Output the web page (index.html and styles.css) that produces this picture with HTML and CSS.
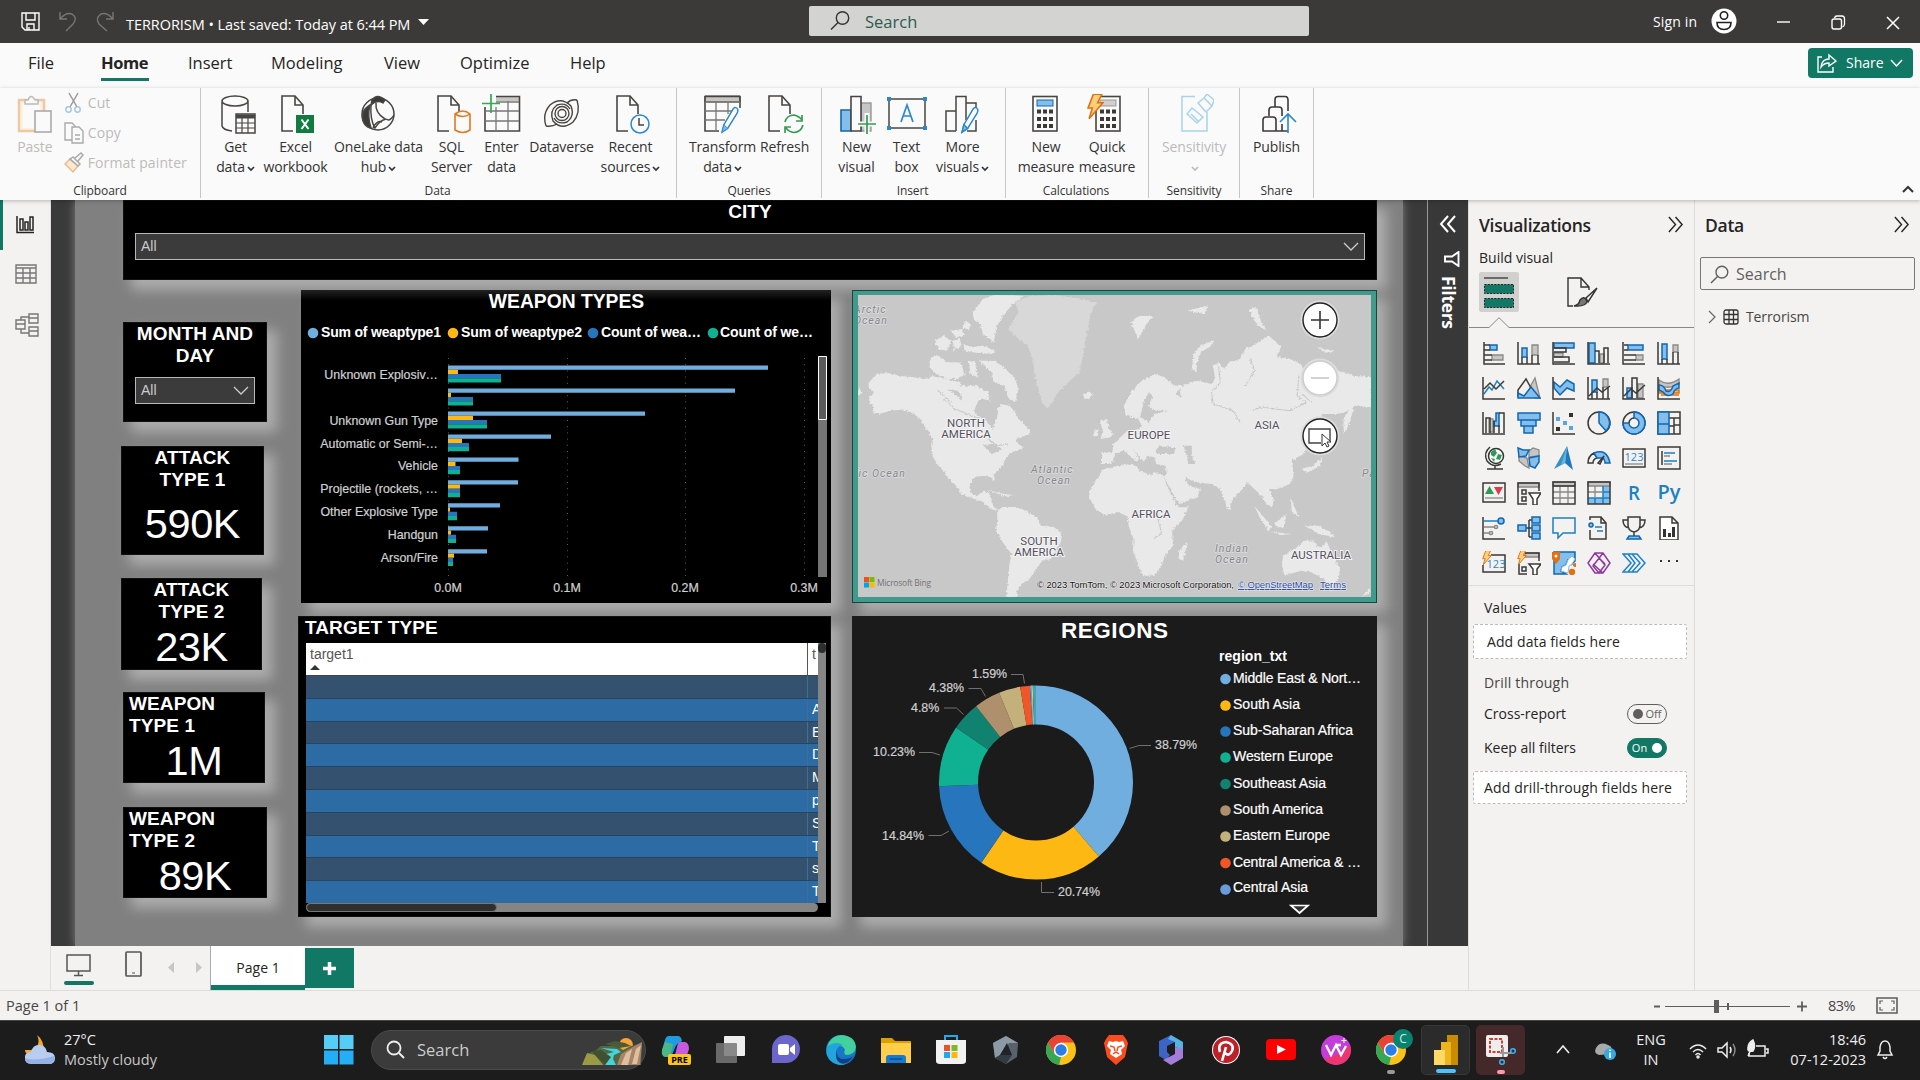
FILE: index.html
```html
<!DOCTYPE html>
<html lang="en">
<head>
<meta charset="utf-8">
<title>TERRORISM - Power BI Desktop</title>
<link rel="stylesheet" href="styles.css">
</head>
<body>
<svg class="defs" width="0" height="0">
  <defs>
    <symbol id="page" viewBox="0 0 40 40"><path d="M17 37H6V2H19L27 11V20" fill="#fafafa" stroke="#484644" stroke-width="1.6"/><path d="M19 2V11H27" fill="none" stroke="#484644" stroke-width="1.6"/></symbol>
    <symbol id="pencil" viewBox="0 0 20 30"><path d="M2 28L4 20L14 3Q17 0 19 4Q19 6 18 8L8 24Z" fill="#fff" stroke="#2b88d0" stroke-width="1.6"/><path d="M2 28L4 20L8 24Z" fill="#83beec" stroke="#2b88d0"/></symbol>
    <symbol id="chrome" viewBox="0 0 30 30"><circle cx="15" cy="15" r="15" fill="#fbc116"/><path d="M2 7.500L8.500 19L15 22L13 29.900A15 15 0 0 1 2 7.500" fill="#34a853"/><path d="M2 7.500A15 15 0 0 1 28 7.500H15L8.500 12.500 8.500 19Z" fill="#e94335"/><circle cx="15" cy="15" r="7.200" fill="#fff"/><circle cx="15" cy="15" r="5.700" fill="#2b7de9"/></symbol>
    <symbol id="bolt" viewBox="0 0 16 26"><path d="M6 1H14L10 9H15L2 24L5 14H1Z" fill="#fcd07a" stroke="#e07010" stroke-width="1.500"/></symbol>
    <symbol id="lens" viewBox="0 0 20 20"><circle cx="12.500" cy="7.500" r="6.200" fill="none" stroke="currentColor" stroke-width="1.400"/><path d="M8 12L1 19" stroke="currentColor" stroke-width="1.500"/></symbol>
    <symbol id="dbl" viewBox="0 0 16 18"><path d="M1 1L8 9L1 17M8 1L15 9L8 17" fill="none" stroke="currentColor" stroke-width="1.500"/></symbol>
    <symbol id="down" viewBox="0 0 8 6"><path d="M1 1L4 4L7 1" fill="none" stroke="currentColor" stroke-width="1.700"/></symbol>
    <filter id="coast" x="-5%" y="-5%" width="110%" height="110%"><feTurbulence type="fractalNoise" baseFrequency=".14" numOctaves="3" seed="4"/><feDisplacementMap in="SourceGraphic" scale="11" xChannelSelector="R" yChannelSelector="G"/></filter>
  </defs>
</svg>

<header class="titlebar">
  <svg class="qat" width="100" height="24" viewBox="0 0 100 24" fill="none"><path d="M2 3H19V20H5L2 17ZM6 3V10H15V3M7 20V14H14V20M9 17V20" stroke="#fff" stroke-width="1.400"/><path d="M40 2V9H47M40 9Q46 2 52 4Q58 8 53 14L46 21" stroke="#787673" stroke-width="1.400"/><path d="M93 2V9H86M93 9Q87 2 81 4Q75 8 79 14L87 21" stroke="#787673" stroke-width="1.400"/></svg>
  <span class="doc">TERRORISM • Last saved: Today at 6:44 PM</span>
  <svg class="doc-caret" width="12" height="7"><path d="M0 0H11L5.500 6Z" fill="#fff"/></svg>
  <div class="top-search"><svg width="20" height="21"><use href="#lens"/></svg><span>Search</span></div>
  <span class="signin">Sign in</span>
  <svg class="winctl" width="192" height="28" viewBox="0 0 192 28" fill="none"><circle cx="13" cy="14" r="12.500" fill="#fff"/><circle cx="13" cy="8.500" r="3.700" stroke="#222" stroke-width="1.600"/><path d="M6 15.500H20Q20 22.500 13 22.500Q6 22.500 6 15.500Z" stroke="#222" stroke-width="1.600"/><path d="M66 15H79" stroke="#fff" stroke-width="1.400"/><rect x="121" y="12" width="9.500" height="10" rx="2" stroke="#fff" stroke-width="1.400"/><path d="M123.500 11Q124 9 126 9H131Q133.500 9 133.500 12V17Q133.500 19 131.500 20" stroke="#fff" stroke-width="1.300"/><path d="M176 10L188 22M188 10L176 22" stroke="#fff" stroke-width="1.500"/></svg>
</header>

<nav class="tabs">
  <span class="t-file">File</span><span class="t-home on">Home</span><span class="t-insert">Insert</span><span class="t-model">Modeling</span><span class="t-view">View</span><span class="t-opt">Optimize</span><span>Help</span>
  <button class="share"><svg width="20" height="20" fill="none" stroke="#fff" stroke-width="1.400"><path d="M5 4H1V19H16V14M4 14Q5 6 12 6V2L19 8L12 13V10Q7 10 4 14Z"/></svg><span>Share</span><svg width="13" height="9" fill="none" stroke="#fff" stroke-width="1.500"><path d="M1 1L6.500 7L12 1"/></svg></button>
</nav>

<section class="ribbon">
  <div class="group g-clip"><div class="tools">
    <div class="tool paste dim"><svg width="36" height="40" viewBox="0 0 36 40" fill="none"><rect x="2" y="6" width="25" height="31" fill="#fdf1dc" stroke="#eac9a4" stroke-width="2.500"/><rect x="6" y="9" width="17" height="25" fill="#fafafa"/><path d="M8 10V6H11Q14 -1 18 6H21V10Z" fill="#fafafa" stroke="#bbb" stroke-width="1.500"/><rect x="18" y="17" width="16" height="21" fill="#fafafa" stroke="#aaa" stroke-width="1.600"/></svg><span>Paste</span></div>
    <div class="small">
      <div><svg width="20" height="22" fill="none"><path d="M5 1L13 15M14 1L6 15" stroke="#999" stroke-width="1.500"/><circle cx="4.500" cy="17.500" r="2.700" stroke="#a4c8e6" stroke-width="1.500"/><circle cx="13.500" cy="17.500" r="2.700" stroke="#a4c8e6" stroke-width="1.500"/></svg>Cut</div>
      <div><svg width="20" height="22" fill="#fafafa" stroke="#aaa" stroke-width="1.400"><path d="M8 18H1V1H8L11 4V6"/><path d="M8 5H15L19 9V21H8ZM11 13H16M11 17H16"/></svg>Copy</div>
      <div><svg width="20" height="22" fill="none"><path d="M1 12L6 7L14 14L9 20Z" fill="#fde9cf" stroke="#e8bb8d" stroke-width="1.500"/><path d="M6 7L9 5L16 12L14 14ZM11 6L17 1L19 3L14 9" stroke="#aaa" stroke-width="1.500"/></svg>Format painter</div>
    </div></div><label>Clipboard</label></div>
  <div class="group g-data"><div class="tools">
    <div class="tool w60"><svg width="40" height="40" viewBox="0 0 40 40" fill="none" stroke="#484644" stroke-width="1.500"><path d="M16 37Q7 36 6 32V7M32 7V18M32 7A13 5 0 0 1 6 7A13 5 0 0 1 32 7Z"/><rect x="20" y="20" width="19" height="19" fill="#fafafa"/><path d="M20 22.500H39" stroke-width="4"/><path d="M20 29H39M20 34H39M26 24V39M32 24V39" stroke-width="1.200"/></svg><span>Get<br>data<svg class="dd"><use href="#down"/></svg></span></div>
    <div class="tool w60"><svg width="40" height="40" viewBox="0 0 40 40"><use href="#page"/><rect x="20" y="21" width="18" height="18" fill="#107c41"/><path d="M25.500 25.500L32.500 35M32.500 25.500L25.500 35" stroke="#fff" stroke-width="2"/></svg><span>Excel<br>workbook</span></div>
    <div class="tool w106"><svg width="40" height="40" viewBox="0 0 40 40" fill="none" stroke="#484644" stroke-width="1.500"><circle cx="19" cy="20" r="16"/><path d="M13 6Q18 -1 26 6L24 9Q18 5 12 11ZM11 11Q1 17 4 27Q6 33 12 34Q8 22 11 11Z" fill="#3b3a39"/><path d="M12 11Q11 26 16 34Q20 27 27 25M17 9Q16 19 26 25"/><path d="M27 25Q31 28 35 21M14 34Q18 26 23 28"/></svg><span>OneLake data<br>hub<svg class="dd"><use href="#down"/></svg></span></div>
    <div class="tool w40"><svg width="40" height="40" viewBox="0 0 40 40"><use href="#page"/><path d="M23 20Q31 14 38 20V36Q31 41 23 36Z" fill="#fafafa" stroke="#e07a20" stroke-width="1.600"/><path d="M23 20Q31 25 38 20" fill="none" stroke="#e07a20" stroke-width="1.500"/></svg><span>SQL<br>Server</span></div>
    <div class="tool w60"><svg width="40" height="40" viewBox="0 0 40 40" fill="none" stroke="#484644"><path d="M14 3H37V7H14Z" fill="#c8c6c4" stroke="none"/><path d="M14 2.500H37.500V37H3V13" stroke-width="1.600"/><path d="M3 17H37M3 27H37M14 13V37M26 7V37M14 8H37" stroke="#777" stroke-width="1.300"/><path d="M9 0V19M0 9.500H18" stroke="#35a853" stroke-width="1.700"/></svg><span>Enter<br>data</span></div>
    <div class="tool w60"><svg width="40" height="40" viewBox="0 0 40 40" fill="none" stroke="#484644" stroke-width="1.400"><path d="M35 6Q39 19 31 28Q20 37 11 27Q7 17 15 11Q24 8 28 15M35 6Q29 5 25 9"/><path d="M4 32Q0 20 8 11Q19 2 29 12Q33 22 25 28Q16 31 12 24M4 32Q10 33 15 30"/><circle cx="20" cy="19.500" r="7"/><circle cx="20" cy="19.500" r="4"/></svg><span>Dataverse</span></div>
    <div class="tool w78"><svg width="40" height="40" viewBox="0 0 40 40"><use href="#page"/><circle cx="29" cy="30" r="9" fill="#fafafa" stroke="#2b88d0" stroke-width="1.500"/><path d="M28 24V31H33" fill="none" stroke="#484644" stroke-width="1.500"/></svg><span>Recent<br>sources<svg class="dd"><use href="#down"/></svg></span></div>
  </div><label>Data</label></div>
  <div class="group g-query"><div class="tools">
    <div class="tool w76"><svg width="40" height="40" viewBox="0 0 40 40" fill="none" stroke="#484644"><path d="M2 2H37V8H2Z" fill="#c8c6c4"/><path d="M16 37H2V2.500H37V14" stroke-width="1.600"/><path d="M2 8H37M2 17H30M2 26H22M13 8V37M25 8V20" stroke="#777" stroke-width="1.300"/><use href="#pencil" x="14" y="12" width="25" height="28"/></svg><span>Transform<br>data<svg class="dd"><use href="#down"/></svg></span></div>
    <div class="tool w48"><svg width="40" height="40" viewBox="0 0 40 40"><use href="#page" x="-2"/><path d="M20 28Q22 21 29 21Q34 22 37 26M37 21V27H31M38 31Q36 38 29 38.500Q24 38 21 34M20 39V33H26" fill="none" stroke="#379a56" stroke-width="1.700"/></svg><span>Refresh</span></div>
  </div><label>Queries</label></div>
  <div class="group g-insert"><div class="tools">
    <div class="tool w50"><svg width="40" height="40" viewBox="0 0 40 40"><path d="M24 9H34V37H24Z" fill="#c8c6c4" stroke="#999" stroke-width="1.400"/><path d="M4 16H14V37H4Z" fill="#83beec" stroke="#1068b0" stroke-width="1.600"/><path d="M14 2.500H24V37H14Z" fill="#fafafa" stroke="#484644" stroke-width="1.600"/><path d="M30 19V40M20 30H40" stroke="#fafafa" stroke-width="5"/><path d="M30 21V40M21 30H39" stroke="#379a56" stroke-width="1.700"/></svg><span>New<br>visual</span></div>
    <div class="tool w50"><svg width="40" height="40" viewBox="0 0 40 40"><rect x="2" y="5" width="36" height="29" fill="none" stroke="#484644" stroke-width="1.500"/><g fill="#2b88d0"><path d="M0 3h4v4H0zM36 3h4v4h-4zM0 32h4v4H0zM36 32h4v4h-4z"/></g><path d="M14 28L20 11L26 28M16 22H24" fill="none" stroke="#2b88d0" stroke-width="1.700"/></svg><span>Text<br>box</span></div>
    <div class="tool w62"><svg width="40" height="40" viewBox="0 0 40 40" fill="none" stroke="#484644" stroke-width="1.500"><path d="M13 37H3V17H13V37M13 17V2.500H23V26M23 9H33V14M33 26V37H24"/><use href="#pencil" x="13" y="12" width="27" height="28"/></svg><span>More<br>visuals<svg class="dd"><use href="#down"/></svg></span></div>
  </div><label>Insert</label></div>
  <div class="group g-calc"><div class="tools">
    <div class="tool w62"><svg width="40" height="40" viewBox="0 0 40 40"><rect x="7" y="2.500" width="24" height="34.500" fill="#fafafa" stroke="#484644" stroke-width="1.600"/><rect x="11" y="6" width="16" height="6" fill="#83beec" stroke="#1068b0"/><path d="M11 17.500h17M11 25h17M11 32h17" stroke="#3b3a39" stroke-width="4" stroke-dasharray="4 2"/></svg><span>New<br>measure</span></div>
    <div class="tool w60"><svg width="40" height="40" viewBox="0 0 40 40"><rect x="9" y="2.500" width="24" height="34.500" fill="#fafafa" stroke="#484644" stroke-width="1.600"/><rect x="13" y="6" width="16" height="6" fill="#d2d0ce" stroke="#999"/><path d="M13 17.500h17M13 25h17M13 32h17" stroke="#3b3a39" stroke-width="4" stroke-dasharray="4 2"/><use href="#bolt" x="0" y="-1" width="17" height="28"/></svg><span>Quick<br>measure</span></div>
  </div><label>Calculations</label></div>
  <div class="group g-sens"><div class="tools"><div class="tool w60 dim"><svg width="40" height="40" viewBox="0 0 40 40" fill="none" stroke="#a9d3ea" stroke-width="1.500"><path d="M21 2.500H8V37H33V18"/><path d="M13 20L18 14L29 23L23 29ZM17 20L24 27M24 9L30 4L38 12L32 18ZM30 4L33 0L40 6L38 12M25 10L31 17"/></svg><span>Sensitivity<br><svg class="dd"><use href="#down"/></svg></span></div></div><label>Sensitivity</label></div>
  <div class="group g-share"><div class="tools"><div class="tool w60"><svg class="pub" width="40" height="40" viewBox="0 0 40 40" fill="none" stroke="#3b3a39" stroke-width="1.600"><path d="M15 13V6Q15 2.500 18 2.500H25Q28 2.500 28 6V17M9 22V16Q9 13 12 13H19Q22 13 22 16V22M28 37H3V26Q3 23 6 23H13Q16 23 16 26V37M22 30V37"/><path d="M28 39V20M20 28L28 20L36 28" stroke="#2b88d0"/></svg><span>Publish</span></div></div><label>Share</label></div>
  <svg class="collapse" width="12" height="8" fill="none" stroke="#333" stroke-width="2"><path d="M1 7L6 2L11 7"/></svg>
</section>

<main class="work">
  <div class="stage-wrap">
    <div class="upper">
      <aside class="rail">
        <svg width="20" height="20" viewBox="0 0 20 20" fill="none" stroke="#252423" stroke-width="1.500"><path d="M2 1V17.500H19"/><path d="M5 4H8V15H5ZM10 7H13V15H10ZM15 2H18V15H15Z"/></svg>
        <svg width="22" height="20" viewBox="0 0 22 20" fill="none" stroke="#777" stroke-width="1.400"><path d="M1 1H21V19H1ZM1 4H21M1 9H21M1 14H21M8 4V19M15 4V19"/></svg>
        <svg width="24" height="24" viewBox="0 0 24 24" fill="none" stroke="#777" stroke-width="1.400"><path d="M14 1H23V10H14ZM14 5H23M1 7H10V16H1ZM1 11H10M14 14H23V23H14ZM14 18H23M6 7V4H14M6 16V20H14"/></svg>
      </aside>
      <div class="stage">
        <div class="report">
          <section class="visual city"><h2>CITY</h2><div class="slicer"><span>All</span><svg width="16" height="10"><path d="M1 1L8 8L15 1" fill="none" stroke="#ccc" stroke-width="1.300"/></svg></div></section>
          <div class="report-body">
            <div class="kpis">
              <section class="visual month"><h2>MONTH AND<br>DAY</h2><div class="slicer"><span>All</span><svg width="16" height="10"><path d="M1 1L8 8L15 1" fill="none" stroke="#ccc" stroke-width="1.300"/></svg></div></section>
              <section class="visual kpi k1"><h2>ATTACK<br>TYPE 1</h2><b>590K</b></section>
              <section class="visual kpi k2"><h2>ATTACK<br>TYPE 2</h2><b>23K</b></section>
              <section class="visual kpi k3"><h2>WEAPON<br>TYPE 1</h2><b>1M</b></section>
              <section class="visual kpi k4"><h2>WEAPON<br>TYPE 2</h2><b>89K</b></section>
            </div>
            <div class="charts">
              <section class="visual weapons">
                <svg width="530" height="314" viewBox="301 290 530 314">
                  <text class="vt" x="566.500" y="308" text-anchor="middle">WEAPON TYPES</text>
                  <g class="lg"><circle cx="313" cy="333" r="5.300" fill="#70aee0"/><text x="321" y="337" textLength="120">Sum of weaptype1</text><circle cx="453" cy="333" r="5.300" fill="#fdb813"/><text x="461" y="337" textLength="121">Sum of weaptype2</text><circle cx="593" cy="333" r="5.300" fill="#2776bd"/><text x="601" y="337" textLength="100">Count of wea…</text><circle cx="713" cy="333" r="5.300" fill="#10b093"/><text x="720" y="337" textLength="93">Count of we…</text></g>
                  <path d="M448.500 358V577M567.500 358V577M685.500 358V577M804.500 358V577" stroke="#5a5a5a" stroke-dasharray="1 5.200"/>
                  <path fill="#70aee0" d="M448 365.500h320v4.300H448zM448 388.500h287v4.300H448zM448 411.500h197v4.300H448zM448 434.400h103v4.300H448zM448 457.400h70.500v4.300H448zM448 480.300h70v4.300H448zM448 503.300h52v4.300H448zM448 526.200h40v4.300H448zM448 549.200h39v4.300H448z"/>
                  <path fill="#fdb813" d="M448 369.800h10v4.200h-10zM448 392.800h3v4.200h-3zM448 415.800h25v4.200h-25zM448 438.700h14v4.200h-14zM448 461.700h7.500v4.200H448zM448 484.600h12v4.200h-12zM448 507.600h2v4.200h-2zM448 530.500h3v4.200h-3zM448 553.500h6v4.200h-6z"/>
                  <path fill="#2776bd" d="M448 374h53v4.200h-53zM448 397h25v4.200h-25zM448 420h39v4.200h-39zM448 442.900h21v4.200h-21zM448 465.900h12v4.200h-12zM448 488.800h12v4.200h-12zM448 511.800h9v4.200h-9zM448 534.700h8v4.200h-8zM448 557.700h5v4.200h-5z"/>
                  <path fill="#10b093" d="M448 378.200h53v4.200h-53zM448 401.200h25v4.200h-25zM448 424.200h39v4.200h-39zM448 447.100h21v4.200h-21zM448 470.100h12v4.200h-12zM448 493h12v4.200h-12zM448 516h9v4.200h-9zM448 538.900h8v4.200h-8zM448 561.900h5v4.200h-5z"/>
                  <g class="ax" text-anchor="end"><text x="438" y="379">Unknown Explosiv…</text><text x="438" y="425">Unknown Gun Type</text><text x="438" y="448">Automatic or Semi-…</text><text x="438" y="470">Vehicle</text><text x="438" y="493">Projectile (rockets, …</text><text x="438" y="516">Other Explosive Type</text><text x="438" y="539">Handgun</text><text x="438" y="562">Arson/Fire</text></g>
                  <g class="ax" text-anchor="middle"><text x="448" y="592">0.0M</text><text x="567" y="592">0.1M</text><text x="685" y="592">0.2M</text><text x="804" y="592">0.3M</text></g>
                  <path d="M818 356h9v221h-9z" fill="#757575"/><path d="M818.500 356.500h8v63h-8z" fill="#5a5a5a" stroke="#fff"/>
                </svg>
              </section>
              <section class="visual map">
                <svg width="513" height="302" viewBox="0 0 513 302">
                  <rect width="513" height="302" fill="#c8c8c8"/>
                  <g transform="scale(.357 .3333) translate(-50 -48)" fill="#e9e9e9" filter="url(#coast)">
                    <path d="M80 310L105 285 135 282 165 290 205 295 235 300 260 295 300 315 340 320 385 320 400 330 405 350 385 370 375 395 385 410 410 425 420 440 428 450 432 430 440 415 440 390 450 375 475 380 490 400 500 420 520 440 535 460 510 475 490 480 505 500 515 505 495 515 480 520 465 535 455 560 440 575 430 585 435 610 425 600 415 590 390 592 370 600 362 625 368 645 385 650 395 640 410 638 420 645 425 665 430 685 445 692 425 692 400 668 370 658 340 645 325 620 305 600 290 575 275 560 260 535 255 500 258 480 250 460 235 440 225 420 200 400 170 392 140 395 110 405 90 400 95 385 80 370 85 350 95 340 80 325Z"/>
                    <path d="M372 100L400 60 430 48 512 50 480 80 455 110 440 140 430 190 400 165 390 130 375 125ZM390 245L430 245 460 265 490 300 500 330 490 370 470 355 460 320 430 310 425 280ZM255 235L275 230 300 250 335 250 350 285 330 300 300 300 270 285 250 265ZM265 185L290 170 310 185 300 215 275 210ZM310 155L340 150 350 170 325 175ZM345 195L370 205 400 200 435 215 425 225 350 218ZM360 245L378 250 385 295 365 285ZM385 340L415 335 420 365 400 360ZM350 125L365 135 360 155 345 145ZM315 185L335 180 340 200 320 215ZM250 290L300 300 340 312 330 325 260 305Z"/>
                    <path d="M470 150L500 100 490 70 530 52 600 48 680 60 718 70 700 110 690 170 680 230 670 280 640 310 610 340 595 370 580 388 565 370 555 330 545 290 540 240 525 200 500 180Z" fill="#d8d8d8"/>
                    <path d="M680 345L695 338 710 345 700 358 685 360ZM440 695L455 684 490 684 520 695 550 715 565 740 600 745 622 765 618 790 600 820 590 840 565 845 550 870 530 900 510 915 495 935 495 956 466 956 470 900 475 850 480 825 455 790 437 755 440 720ZM735 572L770 562 800 555 830 560 838 575 870 588 880 580 905 588 915 620 930 650 945 685 975 685 960 720 930 755 932 800 910 830 900 860 880 888 850 892 840 870 820 815 822 780 808 740 805 712 780 700 740 708 715 690 697 655 700 630 720 600ZM950 815L970 790 972 805 960 845 948 840Z"/>
                    <path d="M730 555L732 520 762 520 765 495 780 480 800 460 830 455 845 440 835 420 820 415 800 410 795 380 815 340 840 310 880 285 910 295 935 320 960 320 1000 305 1040 315 1050 300 1045 260 1060 250 1075 270 1090 250 1120 240 1135 210 1170 190 1200 170 1235 200 1225 235 1260 240 1290 255 1300 270 1340 270 1400 275 1440 290 1487 295 1490 385 1440 380 1425 440 1410 465 1410 420 1425 395 1395 405 1350 405 1345 440 1320 500 1290 530 1265 545 1270 590 1260 615 1225 630 1200 630 1215 660 1210 685 1195 675 1175 645 1155 625 1140 610 1120 640 1100 660 1090 695 1075 660 1065 630 1040 615 1000 610 975 600 965 590 975 620 1010 630 1000 655 950 675 930 640 905 590 915 585 912 560 885 555 880 535 860 530 850 550 820 510 838 540 828 545 795 515 770 525 760 555Z"/>
                    <path d="M730 480L735 455 728 425 748 420 752 450 765 465 755 475ZM712 455L724 450 722 470 710 472ZM815 130L840 110 878 112 858 135 835 180ZM985 270L990 225 1010 200 1050 182 1040 200 1010 220 1000 250 998 280ZM1145 90L1165 85 1180 130 1195 155 1165 135ZM1335 205L1385 215 1360 222ZM970 95L1030 80 1020 105ZM1340 545L1350 535 1345 560 1310 580 1290 570 1325 560ZM1160 680L1210 745 1200 755 1175 715ZM1215 735L1250 705 1245 745 1225 745ZM1205 758L1265 765 1235 768ZM1300 740L1340 740 1375 760 1385 775 1340 765ZM1262 655L1275 690 1285 715 1265 700ZM1240 830L1280 805 1300 785 1325 785 1335 800 1350 805 1362 785 1380 830 1400 870 1395 900 1375 938 1355 900 1320 880 1290 875 1245 890 1238 860ZM1460 954L1482 930 1487 940ZM50 325L62 340 50 350ZM410 632L460 645 490 648 460 652Z"/>
                    <path fill="#c8c8c8" d="M840 415L850 370 865 340 875 350 865 380 880 395 920 395 880 405 865 430ZM880 520L895 500 940 505 935 525 895 525ZM960 500L985 500 985 530 995 555 975 555 970 525ZM400 498L430 495 455 510 425 525ZM300 330L330 335 345 365 320 345ZM940 345L950 330 955 355Z"/>
                    <path fill="none" stroke="#c8c8c8" stroke-width="3" d="M1060 260L1065 310 1040 340 1045 375 1100 395 1120 430M1150 240L1160 275 1135 320M1285 290L1280 350 1305 370 1260 395 1180 385 1150 395M290 360L320 390 345 400 390 420M270 330L310 370M1290 340L1320 370M890 720L900 760 880 780M470 495L440 500 415 480"/>
                  </g>
                  <g class="land" text-anchor="middle"><text x="108" y="131.500">NORTH</text><text x="108" y="143">AMERICA</text><text x="291" y="144">EUROPE</text><text x="409" y="133.500">ASIA</text><text x="293" y="222.500">AFRICA</text><text x="181" y="249.500">SOUTH</text><text x="181" y="261">AMERICA</text><text x="463" y="264">AUSTRALIA</text></g>
                  <g class="sea"><text x="-4" y="18">Arctic</text><text x="-4" y="29">Ocean</text><text x="-4" y="182">fic Ocean</text><text x="173" y="178">Atlantic</text><text x="179" y="189">Ocean</text><text x="357" y="257">Indian</text><text x="357" y="268">Ocean</text><text x="504" y="182">Pa</text></g>
                  <g stroke="#ddd" stroke-width="5"><circle cx="462" cy="25" r="17" fill="#fff"/><circle cx="462" cy="83" r="17" fill="#fff"/><circle cx="462" cy="141" r="17" fill="#fff"/></g>
                  <g fill="#fff" stroke="#222" stroke-width="1.400"><circle cx="462" cy="25" r="17"/><circle cx="462" cy="83" r="17" stroke="#ccc"/><circle cx="462" cy="141" r="17"/></g>
                  <path d="M453 25H471M462 16V34" stroke="#333" stroke-width="1.600"/><path d="M453 83H471" stroke="#c8c8c8" stroke-width="1.600"/>
                  <path d="M463 148H451V134H472V147" fill="none" stroke="#444" stroke-width="1.400"/><path d="M464 139V151L467 148L469 152L471 151L469 147H473Z" fill="#fff" stroke="#333"/>
                  <path fill="#f25022" d="M6 282h5v5H6z"/><path fill="#7fba00" d="M11.500 282h5v5h-5z"/><path fill="#00a4ef" d="M6 287.500h5v5H6z"/><path fill="#ffb900" d="M11.500 287.500h5v5h-5z"/>
                  <text class="bing" x="19" y="291" textLength="54">Microsoft Bing</text>
                  <text class="credit" x="179" y="293" textLength="197">© 2023 TomTom, © 2023 Microsoft Corporation,</text><text class="credit lnk" x="380" y="293" textLength="75">© OpenStreetMap</text><text class="credit lnk" x="462" y="293" textLength="26">Terms</text>
                </svg>
              </section>
              <section class="visual targets">
                <h2>TARGET TYPE</h2>
                <div class="tbl-wrap">
                  <div class="tbl">
                    <div class="th"><span>target1<i></i></span><span>t</span></div>
                    <div class="tr"><span></span><span></span></div><div class="tr"><span></span><span>A</span></div><div class="tr"><span></span><span>E</span></div><div class="tr"><span></span><span>D</span></div><div class="tr"><span></span><span>M</span></div><div class="tr"><span></span><span>p</span></div><div class="tr"><span></span><span>S</span></div><div class="tr"><span></span><span>T</span></div><div class="tr"><span></span><span>s</span></div><div class="tr"><span></span><span>T</span></div>
                  </div>
                  <div class="vbar"><i></i></div>
                </div>
                <div class="hbar"><i></i></div>
              </section>
              <section class="visual regions">
                <svg width="525" height="301" viewBox="852 616 525 301">
                  <text class="vt big" x="1114.500" y="638" text-anchor="middle" textLength="107">REGIONS</text>
                  <g transform="rotate(-90 1036 782.500)" fill="none" stroke-width="39">
                    <circle cx="1036" cy="782.500" r="77.500" pathLength="100" stroke="#70aee0" stroke-dasharray="38.790 61.210"/>
                    <circle cx="1036" cy="782.500" r="77.500" pathLength="100" stroke="#fdb813" stroke-dasharray="20.740 79.260" stroke-dashoffset="-38.790"/>
                    <circle cx="1036" cy="782.500" r="77.500" pathLength="100" stroke="#2776bd" stroke-dasharray="14.840 85.160" stroke-dashoffset="-59.530"/>
                    <circle cx="1036" cy="782.500" r="77.500" pathLength="100" stroke="#10b093" stroke-dasharray="10.230 89.770" stroke-dashoffset="-74.370"/>
                    <circle cx="1036" cy="782.500" r="77.500" pathLength="100" stroke="#118270" stroke-dasharray="4.800 95.200" stroke-dashoffset="-84.600"/>
                    <circle cx="1036" cy="782.500" r="77.500" pathLength="100" stroke="#ae906d" stroke-dasharray="4.380 95.620" stroke-dashoffset="-89.400"/>
                    <circle cx="1036" cy="782.500" r="77.500" pathLength="100" stroke="#c4b07b" stroke-dasharray="3.600 96.400" stroke-dashoffset="-93.780"/>
                    <circle cx="1036" cy="782.500" r="77.500" pathLength="100" stroke="#f15628" stroke-dasharray="1.590 98.410" stroke-dashoffset="-97.380"/>
                    <circle cx="1036" cy="782.500" r="77.500" pathLength="100" stroke="#6b96d6" stroke-dasharray=".4 99.600" stroke-dashoffset="-98.970"/>
                    <circle cx="1036" cy="782.500" r="77.500" pathLength="100" stroke="#e6c963" stroke-dasharray=".2 99.800" stroke-dashoffset="-99.250"/>
                    <circle cx="1036" cy="782.500" r="77.500" pathLength="100" stroke="#3fa6b4" stroke-dasharray=".55 99.450" stroke-dashoffset="-99.450"/>
                  </g>
                  <path fill="none" stroke="#707070" d="M1129.500 748.500L1139 745.500H1151M1041.500 882V892.500H1054M928.500 835.500H941L949 831M919 752.500H932L940 755M944 708H956.500L963.500 714.500M968.500 688.500H981L985.500 696.500M1011 674.500H1023L1024.500 683.500"/>
                  <g class="ax"><text x="1155" y="749">38.79%</text><text x="1058" y="896">20.74%</text><text x="882" y="840">14.84%</text><text x="873" y="756">10.23%</text><text x="911" y="712">4.8%</text><text x="929" y="692">4.38%</text><text x="972" y="678">1.59%</text></g>
                  <text class="lgt" x="1219" y="661" textLength="68">region_txt</text>
                  <g class="lgr"><text x="1233" y="683" textLength="128">Middle East &amp; Nort…</text><text x="1233" y="709" textLength="67">South Asia</text><text x="1233" y="735" textLength="120">Sub-Saharan Africa</text><text x="1233" y="761" textLength="100">Western Europe</text><text x="1233" y="788" textLength="93">Southeast Asia</text><text x="1233" y="814" textLength="90">South America</text><text x="1233" y="840" textLength="97">Eastern Europe</text><text x="1233" y="867" textLength="128">Central America &amp; …</text><text x="1233" y="892" textLength="75">Central Asia</text></g>
                  <circle cx="1225.500" cy="679" r="5.300" fill="#70aee0"/><circle cx="1225.500" cy="705.500" r="5.300" fill="#fdb813"/><circle cx="1225.500" cy="731.500" r="5.300" fill="#2776bd"/><circle cx="1225.500" cy="757.500" r="5.300" fill="#10b093"/><circle cx="1225.500" cy="784" r="5.300" fill="#118270"/><circle cx="1225.500" cy="810.500" r="5.300" fill="#ae906d"/><circle cx="1225.500" cy="836.500" r="5.300" fill="#c4b07b"/><circle cx="1225.500" cy="863" r="5.300" fill="#f15628"/><circle cx="1225.500" cy="889.500" r="5.300" fill="#6b9bdc"/>
                  <path d="M1291 905.500H1308L1299.500 913Z" fill="#333" stroke="#fff" stroke-width="1.700"/>
                </svg>
              </section>
            </div>
          </div>
        </div>
      </div>
      <aside class="filters"><svg width="18" height="18"><path d="M9 1L2 9L9 17M16 1L9 9L16 17" fill="none" stroke="#fff" stroke-width="2"/></svg><svg class="fun" width="16" height="16"><path d="M14.500 1V15L8 10.500H1V5.500H8Z" fill="none" stroke="#fff" stroke-width="1.900"/></svg><span>Filters</span></aside>
    </div>
    <footer class="pages">
      <svg class="devices" width="144" height="40" viewBox="0 0 144 40" fill="none"><path d="M3 9H26V25H3ZM14.500 25V29M10 29.500H19" stroke="#555" stroke-width="1.500"/><rect x="0" y="35" width="30" height="4" rx="2" fill="#117865"/><rect x="62" y="6" width="15" height="24" rx="1" stroke="#555" stroke-width="1.700"/><path d="M68 27H71" stroke="#555"/><path d="M110 16V27L104 21.500ZM132 16V27L138 21.500Z" fill="#c8c6c4"/></svg>
      <span class="page-tab">Page 1</span><span class="add"><svg width="15" height="15"><path d="M7.500 1V14M1 7.500H14" stroke="#fff" stroke-width="3.500"/></svg></span>
    </footer>
  </div>

  <aside class="viz">
    <div class="pane-head"><h3>Visualizations</h3><svg width="17" height="17"><use href="#dbl"/></svg></div>
    <p class="sub">Build visual</p>
    <div class="modes">
      <span class="mode"><svg width="32" height="34" viewBox="0 0 32 34"><path d="M1 3H25" stroke="#333" stroke-width="1.300"/><path d="M1.500 9.500H30.500V18.500H1.500ZM1.500 23.500H30.500V32.500H1.500Z" fill="#117865" stroke="#222" stroke-dasharray="2 1.300"/></svg></span>
      <svg width="32" height="32" viewBox="0 0 32 32" fill="none" stroke="#333" stroke-width="1.400"><path d="M7 30H2V2H15L23 11V14M15 2V11H23M31 12L20 22L22 26L31 12"/><path d="M8 30Q13 29 14 24Q18 19 21 25Q20 31 8 30Z" fill="#777"/></svg>
    </div>
    <svg class="notch" width="226" height="12" fill="none" stroke="#8a8886"><path d="M0 10.500H20L30 .7L40 10.500H226"/></svg>
    <div class="gallery">
      <svg viewBox="0 0 24 24"><path class="b" d="M8 4H15V9H8Z"/><path class="g" d="M10 14H21V19H10Z"/><path class="k" d="M2 1V23H23M2 4H8M2 9H8M2 14H10M2 19H10"/></svg>
      <svg viewBox="0 0 24 24"><path class="g" d="M15 4H21V14H15Z"/><path class="b" d="M5 7H10V16H5Z"/><path class="k" d="M1 1V23H23M5 16V23M10 16V23M15 14V23M21 14V23"/></svg>
      <svg viewBox="0 0 24 24"><path class="g" d="M2 12H11V16H2Z"/><path class="b" d="M2 2H22V7H2Z"/><path class="k" d="M1 1V23H23M2 7H14V11H2M2 16H17V21H2"/></svg>
      <svg viewBox="0 0 24 24"><path class="b" d="M2 2H8V22H2Z"/><path class="g" d="M13 13H17V22H13Z"/><path class="k" d="M1 1V23H23M8 10H12V22M17 22V7H21V22"/></svg>
      <svg viewBox="0 0 24 24"><path class="b" d="M6 4H21V9H6Z"/><path class="g" d="M14 14H21V19H14Z"/><path class="k" d="M1 1V23H23M2 4H6M2 9H6M2 14H14M2 19H14"/></svg>
      <svg viewBox="0 0 24 24"><path class="b" d="M5 3H10V18H5Z"/><path class="g" d="M16 4H21V11H16Z"/><path class="k" d="M1 1V23H23M5 18V23M10 18V23M16 11V23M21 11V23"/></svg>

      <svg viewBox="0 0 24 24"><path class="bl" d="M2 18L7 11L10 14L15 5L22 13"/><path class="k" d="M1 1V23H23M2 13L8 7L14 13L22 5"/></svg>
      <svg viewBox="0 0 24 24"><path class="g" d="M13 11L18 2L23 22H18Z"/><path class="k" d="M1 21V14L9 3L14 12"/><path class="b" d="M1 22V17L7 20L14 11L23 22Z"/></svg>
      <svg viewBox="0 0 24 24"><path class="b" d="M2 6L8 11L15 4L22 8V15L15 12L8 19L2 12Z"/><path class="k" d="M1 1V23H23"/></svg>
      <svg viewBox="0 0 24 24"><path class="g" d="M16 3H21V11H16Z"/><path class="b" d="M5 4H10V16H5Z"/><path class="k" d="M1 1V23H23M5 16V23M10 16V23M16 11V23M21 11V23M2 20L10 12L15 16L23 10"/></svg>
      <svg viewBox="0 0 24 24"><path class="g" d="M16 8H21V22H16Z"/><path class="b" d="M5 12H10V22H5Z"/><path class="k" d="M1 1V23H23M10 22V2H15V22M2 20L9 13L14 17L23 9"/></svg>
      <svg viewBox="0 0 24 24"><path class="g" d="M2 4Q11 11 22 3V8Q12 14 2 9Z"/><path class="o" d="M2 14H22V17H2ZM4 19H22"/><path class="b" d="M2 9Q7 9 9 15Q14 17 16 10L22 7V12Q18 12 16 18Q10 22 6 16L2 14Z"/><path class="k" d="M1 1V23H23"/></svg>

      <svg viewBox="0 0 24 24"><path class="g" d="M7 8H11V21H7Z"/><path class="b" d="M14 2H17V15H12V10H14Z"/><path class="k" d="M1 1V23H23M4 22V7H8V22M12 10V22M17 2H22V22M17 14V22"/></svg>
      <svg viewBox="0 0 24 24"><path class="b" d="M1 2H23V9H1ZM4 9H19V15H4ZM7 15H16V22H7Z"/></svg>
      <svg viewBox="0 0 24 24"><path class="k" d="M1 1V23H23"/><path fill="#5ba4de" d="M4 6h4v4H4zM11 10h4v4h-4zM17 15h4v4h-4z"/><path fill="#333" d="M17 2h4v4h-4zM4 16h4v4H4z"/></svg>
      <svg viewBox="0 0 24 24"><circle class="k" cx="12" cy="12" r="11"/><path class="b" d="M12 1A11 11 0 0 1 19 20L12 12Z"/></svg>
      <svg viewBox="0 0 24 24"><circle class="k w2" cx="12" cy="12" r="11"/><path class="b" d="M12 1A11 11 0 1 1 1 12H7A5 5 0 1 0 12 7Z"/><path class="k" d="M7 12A5 5 0 0 1 12 7"/></svg>
      <svg viewBox="0 0 24 24"><path class="k" d="M1 1H23V23H1ZM12 7H23M17 7V23M12 15H17M17 14H23"/><path class="b" d="M1 1H12V13H1ZM1 13H12V23H1Z"/></svg>

      <svg viewBox="0 0 24 24"><circle cx="14" cy="10" r="7.500" fill="#fff" stroke="#333" stroke-width="1.500"/><path d="M9 6L13 3L15 7L12 11L9 9ZM16 8L20 9L18 14L14 13ZM9 12L13 13L12 16Z" fill="#2d9a57"/><path class="k" d="M8 1Q1 7 5 15Q11 22 19 18M13 19V23M5 23H21"/></svg>
      <svg viewBox="0 0 24 24"><path class="g" d="M12 5L16 2 22 4V10L12 11ZM2 10L10 12 12 22 8 20 2 15Z"/><path class="b" d="M1 2L6 4H12L9 10 2 11ZM12 12L22 10V16L18 22 13 20Z"/></svg>
      <svg viewBox="0 0 24 24"><path d="M15 0L2 23L13 17Z" fill="#3692c4"/><path d="M15 0L21 24L13 17Z" fill="#1f78bd"/><path d="M15 0L9 19L13 17Z" fill="#62b7dc"/></svg>
      <svg viewBox="0 0 24 24"><path class="k" d="M1 17Q1 10 7 7L10 12Q6 13 6 17Z"/><path class="b" d="M7 7Q20 2 23 17H18Q18 14 16 12L10 12Z"/><path class="k" d="M11 17L17 10L13 18Z"/></svg>
      <svg viewBox="0 0 24 24"><path class="k" d="M1 3H23V21H1Z"/><path class="gl" d="M3 18H21"/><text x="12" y="15" text-anchor="middle" font-size="11" fill="#2b88d0">123</text></svg>
      <svg viewBox="0 0 24 24"><path class="k" d="M1 1H23V23H1ZM5 5V19"/><path class="bl" d="M7 7H18M7 15H20"/><path class="gl" d="M7 10H13M7 18H15"/></svg>

      <svg viewBox="0 0 24 24"><path class="k" d="M1 2H23V21H1Z"/><path d="M3 13L7.500 5L12 13Z" fill="#2d9a57"/><path d="M12 6H21L16.500 14Z" fill="#dc3b4c"/><path class="gl" d="M3 17H21"/></svg>
      <svg viewBox="0 0 24 24"><path class="g" d="M1 2H22V6H1Z"/><path class="k" d="M10 23H1V2H22V10M5 9H9V13H5ZM5 16H9V20H5Z"/><path class="k w" d="M12 12H24L20 18V24H16V18Z"/></svg>
      <svg viewBox="0 0 24 24"><path class="g" d="M1 1H23V5H1Z"/><path class="gl" d="M1 11H23M1 17H23M8 5V23M16 5V23"/><path class="k" d="M1 1H23V23H1ZM1 5H23"/></svg>
      <svg viewBox="0 0 24 24"><path fill="#83beec" d="M16 5H23V23H1V17H16Z"/><path class="g" d="M1 1H23V5H1Z"/><path class="bl" d="M16 5V23M16 11H23M1 17H23M8 17V23"/><path class="gl" d="M1 11H16M8 5V17"/><path class="k" d="M1 1H23V23H1Z"/></svg>
      <svg viewBox="0 0 24 24"><text x="12" y="19" text-anchor="middle" font-size="20" font-weight="600" fill="#1b80c4" textLength="12" lengthAdjust="spacingAndGlyphs">R</text></svg>
      <svg viewBox="0 0 24 24"><text x="12" y="18" text-anchor="middle" font-size="20" font-weight="600" fill="#1b80c4" textLength="23" lengthAdjust="spacingAndGlyphs">Py</text></svg>

      <svg viewBox="0 0 24 24"><path class="k" d="M1 1V23H23"/><path class="bl" d="M2 5H18"/><circle class="b" cx="19" cy="5" r="3"/><path class="gl" d="M2 11H12M2 17H8"/><circle class="g" cx="14" cy="11" r="1.700"/><circle class="g" cx="9" cy="17" r="1.700"/></svg>
      <svg viewBox="0 0 24 24"><path class="k" d="M9 12H15M12 4V21M12 4H15M12 21H15"/><path class="b" d="M1 9H9V15H1ZM15 1H23V7H15ZM15 9H23V15H15ZM15 17H23V23H15Z"/></svg>
      <svg viewBox="0 0 24 24"><path class="bl" fill="#fff" d="M1 2H23V17H11L6 22V17H1Z"/></svg>
      <svg viewBox="0 0 24 24"><path class="k" d="M3 4V1H14L19 7V23H3V14M14 1V7H19"/><circle class="b" cx="4" cy="9" r="2"/><path class="bl" d="M8 11H15M10 15H16"/></svg>
      <svg viewBox="0 0 24 24"><path class="k" d="M6 1H18V9Q18 15 12 16Q6 15 6 9ZM6 4H1Q1 11 7 12M18 4H23Q23 11 17 12M12 16V20"/><path class="b" d="M7 20H17L19 23H5Z"/></svg>
      <svg viewBox="0 0 24 24"><path class="k w" d="M3 1H15L21 7V24H3ZM15 1V7H21"/><path d="M6 13h3v8H6zM11 17h3v4h-3zM15 11h3v10h-3z" fill="#333"/></svg>

      <svg viewBox="0 0 24 24"><path class="k" d="M9 4H23V21H1V14"/><text x="14" y="17" text-anchor="middle" font-size="11" fill="#2b88d0">123</text><use href="#bolt" x="-1" y="-1" width="12" height="16"/></svg>
      <svg viewBox="0 0 24 24"><path class="g" d="M8 2H22V6H8Z"/><path class="k" d="M10 23H2V13M8 2H22V10M5 16H9V20H5Z"/><path class="k w" d="M12 13H24L20 18V24H16V18Z"/><use href="#bolt" x="-1" y="-1" width="12" height="16"/></svg>
      <svg viewBox="0 0 24 24"><path class="b" d="M2 1H23V10L20 13V10L16 9L14 14L10 16L9 20L14 23H2Z"/><path d="M10 16L14 14L16 9L20 5L23 8L20 13L17 15L16 22L9 20Z" fill="#fff" stroke="#83beec"/><path d="M0 1H8V8L4 13L0 8Z" fill="#e07010"/><circle cx="4" cy="5" r="1.500" fill="#fff"/><circle cx="20" cy="21" r="3.200" fill="#e07010"/><circle cx="23" cy="14" r="2" fill="#e07010"/></svg>
      <svg viewBox="0 0 24 24"><path d="M8 2L1 12L8 22H16L23 12L16 2ZM8 2L18 14L12 22L6 15L16 2M12 7L18 13M6 13L16 22" fill="none" stroke="#8d3a9e" stroke-width="1.500"/></svg>
      <svg viewBox="0 0 24 24"><path d="M1 3H15L23 12L15 21H1L9 12ZM6 3L13 12L6 21M10 3L18 12L10 21" fill="none" stroke="#1b80d4" stroke-width="1.500"/></svg>
      <svg viewBox="0 0 24 24"><path d="M3 9h2v2H3zM11 9h2v2h-2zM19 9h2v2h-2z" fill="#333"/></svg>
    </div>
    <div class="wells">
      <p>Values</p><div class="well">Add data fields here</div>
      <p class="drill">Drill through</p>
      <div class="opt"><span>Cross-report</span><span class="tog"><i></i>Off</span></div>
      <div class="opt second"><span>Keep all filters</span><span class="tog yes">On<i></i></span></div>
      <div class="well low">Add drill-through fields here</div>
    </div>
  </aside>

  <aside class="data">
    <div class="pane-head"><h3>Data</h3><svg width="17" height="17"><use href="#dbl"/></svg></div>
    <div class="find"><svg width="19" height="19"><use href="#lens"/></svg><span>Search</span></div>
    <div class="node"><svg width="8" height="14" fill="none" stroke="#666" stroke-width="1.200"><path d="M1 1L7 7L1 13"/></svg><svg width="16" height="16" fill="none" stroke="#333" stroke-width="1.300"><rect x="1" y="1" width="14" height="14" rx="2"/><path d="M6 1V15M10.500 1V15M1 5.500H15M1 10.500H15"/></svg><span>Terrorism</span></div>
  </aside>
</main>

<div class="status"><span>Page 1 of 1</span><svg width="160" height="20" viewBox="0 0 160 20" stroke="#605e5c"><path d="M4 10.500H10" stroke-width="2"/><path d="M15 10.500H140"/><path d="M66.500 4V17" stroke-width="5"/><path d="M78 7V14" stroke-width="2"/><path d="M147 10.500H157M152 5.500V15.500" stroke-width="1.800"/></svg><span class="pct">83%</span><svg width="22" height="17" fill="none" stroke="#605e5c" stroke-width="1.600"><path d="M1 1H21V16H1Z"/><path d="M4 7V4H7M15 4H18V7M18 10V13H15M7 13H4V10" stroke-width="1.200"/></svg></div>

<footer class="taskbar">
  <div class="weather"><svg width="32" height="32" viewBox="0 0 32 32"><path d="M13 1Q18 12 7 16H1Q1 20 5 20L20 18Q20 6 13 1Z" fill="#f3a72c"/><path d="M7 30Q0 29 1 22Q2 18 7 18Q9 10 16 11Q22 12 23 18Q31 18 31 24Q31 30 25 30Z" fill="#b7cdf2"/><path d="M7 30Q0 29 1 24Q10 28 30 22Q31 30 25 30Z" fill="#94b2e6"/></svg><div>27°C<br><span>Mostly cloudy</span></div></div>
  <svg class="start" width="30" height="30"><path d="M0 0h14v14H0zM15.500 0h14v14h-14z" fill="#55cdf8"/><path d="M0 15.500h14v14H0zM15.500 15.500h14v14h-14z" fill="#24aef5"/></svg>
  <div class="tsearch"><svg width="20" height="20"><circle cx="8" cy="8" r="6.500" fill="none" stroke="#eee" stroke-width="1.800"/><path d="M13 13L18 18" stroke="#eee" stroke-width="2"/></svg><span>Search</span>
    <svg class="art" width="64" height="30" viewBox="0 0 64 30"><circle cx="45" cy="8" r="7" fill="#f8a437"/><path d="M2 28Q5 15 14 14L20 9L36 9L42 13L50 9L61 6L60 28Z" fill="#566640"/><path d="M36 28L40 17L50 11L61 5L59 28Z" fill="#a98469"/><path d="M51 12L47 28H40L45 16ZM60 8L56 27H51L55 12Z" fill="#e0bf9f"/><path d="M20 11L36 12L40 15L33 18L32 22L35 28H24L28 21L25 17L33 15Z" fill="#42d4df"/><path d="M1 28L6 16L14 18L22 28Z" fill="#9d9a45"/><path d="M10 14L20 13L30 20L24 28L16 20Z" fill="#3f5131"/><path d="M24 7L34 4L44 6L50 9L38 11Z" fill="#4a5c37"/></svg></div>
  <div class="apps">
    <span><svg viewBox="0 0 30 30"><path d="M8 1H17Q20 1 21 6L18 8Q15 9 13 15L10 22H5Q0 22 1 15L4 5Q5 1 8 1Z" fill="#1f9be0"/><path d="M1 15L4 7L12 9L9 22H5Q0 22 1 15Z" fill="#49b884"/><path d="M19 7H24Q28 8 28 14L26 20H14L16 12Q17 7 19 7Z" fill="#c75be0"/><rect x="7" y="19" width="23" height="11" rx="2" fill="#ffc515"/><text x="18.500" y="28" font-size="9" font-weight="700" text-anchor="middle">PRE</text></svg></span>
    <span><svg viewBox="0 0 30 30"><rect x="8" y="1" width="21" height="20" rx="1" fill="#eee"/><rect x="0" y="8" width="21" height="20" rx="1" fill="#777" opacity=".85"/></svg></span>
    <span><svg viewBox="0 0 30 30"><path d="M1 28V15A14 14 0 1 1 15 28Z" fill="#6b65cc"/><rect x="7" y="9" width="11" height="11" rx="2" fill="#fff"/><path d="M19 13L24 9V20L19 16Z" fill="#fff"/></svg></span>
    <span><svg viewBox="0 0 30 30"><circle cx="15" cy="15" r="15" fill="#1677c9"/><path d="M1 12Q5 0 16 0Q29 1 30 12Q29 20 20 20Q17 18 19 15Q17 8 1 12Z" fill="#43cf9e"/><path d="M1 12Q9 5 17 10Q8 12 11 21Q14 26 24 26Q18 32 10 29Q-2 24 1 12Z" fill="#20a5dc"/><path d="M11 15Q10 24 18 24Q24 24 27 21Q22 31 14 28Q8 24 11 15Z" fill="#153f83"/></svg></span>
    <span><svg viewBox="0 0 30 30"><path d="M0 3H11L14 6H30V28H0Z" fill="#dba000"/><path d="M0 8H30V28H0Z" fill="#ffce4b"/><path d="M5 28V23Q5 20 8 20H22Q25 20 25 23V28Z" fill="#167bd0"/><path d="M9 24H21" stroke="#0c5ba2" stroke-width="2"/></svg></span>
    <span><svg viewBox="0 0 30 30"><path d="M9 6V1H21V6" fill="none" stroke="#22a9eb" stroke-width="2"/><path d="M0 5H30V26Q30 29 26 29H4Q0 29 0 26Z" fill="#f2f2f2"/><path fill="#ed512a" d="M8 10h6v6H8z"/><path fill="#7cbb22" d="M15.500 10h6v6h-6z"/><path fill="#24a6e8" d="M8 17h6v6H8z"/><path fill="#fab716" d="M15.500 17h6v6h-6z"/></svg></span>
    <span><svg viewBox="0 0 30 30"><path d="M15 1L27 8L26 22L15 29L4 23L2 8Z" fill="#59616b"/><path d="M15 1L27 8L18 8L9 20L4 23L2 8Z" fill="#8d99a5"/><path d="M16 8L21 20H9Z" fill="#202327"/><path d="M15 29L21 20H9L4 23Z" fill="#343a41"/></svg></span>
    <span><svg viewBox="0 0 30 30"><use href="#chrome"/></svg></span>
    <span><svg viewBox="0 0 30 30"><path d="M8 0H22L25 4L27 8L24 22L15 30L6 22L3 8L5 4Z" fill="#fb4c20"/><path d="M8 6L12 7L15 6L18 7L22 6L24 11L20 15L21 19L15 23L9 19L10 15L6 11Z" fill="#fff"/><path d="M9 11L13 12L14 16M21 11L17 12L16 16M12 19L15 17L18 19" stroke="#fb4c20" stroke-width="1.500" fill="none"/></svg></span>
    <span><svg viewBox="0 0 30 30"><path d="M15 0L3 6V21L10 25L14 20L11 17V11L19 7Z" fill="#3c64c5"/><path d="M15 0L27 7V15L19 12V7L12 4Z" fill="#54b3e3"/><path d="M27 14V23L15 30L7 25L19 19V12Z" fill="#a47ddb"/></svg></span>
    <span><svg viewBox="0 0 30 30"><circle cx="15" cy="15" r="14" fill="#fff"/><circle cx="15" cy="15" r="13" fill="#bd2028"/><path d="M9 17Q6 8 15 7Q24 9 21 16Q18 22 14 18M15 12L11 26" fill="none" stroke="#fff" stroke-width="2.600"/></svg></span>
    <span><svg viewBox="0 0 30 30"><rect x="0" y="4" width="30" height="21" rx="4" fill="#f00"/><path d="M11 10L20 14.500L11 19Z" fill="#fff"/></svg></span>
    <span><svg viewBox="0 0 30 30"><circle cx="15" cy="15" r="15" fill="#c43ddb"/><path d="M3 24Q16 22 29 10A15 15 0 0 1 3 24Z" fill="#f0356e"/><path d="M5 10L10 20L15 10L20 20L25 11M15 10H20" fill="none" stroke="#fff" stroke-width="2.300"/><path d="M23 3v5M20.500 5.500h5" stroke="#fff"/></svg></span>
    <span class="run"><svg viewBox="0 0 30 30"><use href="#chrome"/></svg><em>C</em></span>
    <span class="run bi"><svg viewBox="0 0 30 30"><path d="M16 0H27V30H16Z" fill="#ca8b00"/><path d="M10 7H20V30H10Z" fill="#edb41b"/><path d="M3 15H14V30H3Z" fill="#ffd866"/></svg></span>
    <span class="run snip"><svg viewBox="0 0 30 30"><rect x="0" y="0" width="22" height="22" rx="2" fill="#eee"/><rect x="4" y="4" width="12" height="13" fill="none" stroke="#d33c2c" stroke-width="2" stroke-dasharray="3 1.500"/><path d="M17 12V22M14 18H25" stroke="#999" stroke-width="2"/><circle cx="27" cy="16" r="2.300" fill="none" stroke="#39aef0" stroke-width="1.600"/><circle cx="16" cy="27" r="2.300" fill="none" stroke="#39aef0" stroke-width="1.600"/></svg></span>
  </div>
  <svg class="tray" width="72" height="30" fill="none"><path d="M1 18L7 11L13 18" stroke="#eee" stroke-width="1.600"/><path d="M43 20Q37 18 40 13Q44 6 52 10Q58 12 55 19Z" fill="#a9a9a9"/><circle cx="54" cy="19" r="6" fill="#38a8e3"/><path d="M54 17.500V23M54 14.500V16" stroke="#fff" stroke-width="1.600"/></svg>
  <div class="lang">ENG<br>IN</div>
  <svg class="sys" width="84" height="24" viewBox="0 0 84 24" fill="none" stroke="#eee" stroke-width="1.500"><path d="M1 11Q9 3 17 11M4 14Q9 9 14 14M6.500 17Q9 14 11.500 17"/><circle cx="9" cy="19" r="1"/><path d="M29 10H33L38 5V19L33 14H29ZM41 9Q43 12 41 15"/><path d="M44 6Q48 12 44 18" stroke="#888"/><path d="M67 8H76V18H60V15M77 11H79V15H77"/><path d="M59 10Q59 5 64 2Q67 8 64 13Q58 14 59 10M59 18L63 9" fill="#eee"/></svg>
  <div class="clock">18:46<br>07-12-2023</div>
  <svg class="bell" width="18" height="22" fill="none" stroke="#eee" stroke-width="1.500"><path d="M2 16L4 12V8Q5 2 9 2Q13 2 14 8V12L16 16ZM7 18Q9 21 11 18"/></svg>
</footer>
</body>
</html>
```
FILE: styles.css
```css
* { box-sizing: border-box; }
body { margin: 0; width: 1920px; height: 1080px; overflow: hidden; background: #f3f2f1; color: #252423; font: 14px/20px "Open Sans", "Noto Sans", sans-serif; }
svg { display: block; flex: none; }
h2, h3, p { margin: 0; }
.defs { position: absolute; }
span { white-space: nowrap; }

/* Title bar */
.titlebar { height: 43px; background: #3b3a38; color: #fff; display: flex; align-items: center; }
.qat { margin-left: 20px; }
.doc { margin: 6px 0 0 6px; width: 284px; font-size: 14.500px; letter-spacing: -.05px; }
.doc-caret { margin: 2px 0 0 8px; }
.top-search { margin: -1px 0 0 379px; width: 500px; height: 30px; background: #d3d3d1; border-radius: 2px; color: #2b5c50; display: flex; align-items: center; padding: 1px 0 0 21px; gap: 15px; font-size: 16.500px; }
.top-search svg { color: #333; margin-top: -2px; }
.signin { margin-left: 344px; width: 47px; letter-spacing: .15px; }
.winctl { margin: -1px 0 0 11px; }

/* Ribbon */
.tabs { height: 45px; background: #fafafa; display: flex; align-items: flex-start; font-size: 16.500px; }
.tabs > span { height: 38px; line-height: 39px; width: auto; }
.t-file { margin-left: 28px; flex: 0 0 73px; }
.tabs .on { flex: 0 0 48px; font-weight: 700; border-bottom: 3px solid #117865; margin-right: 39px; letter-spacing: -.4px; }
.t-insert { flex: 0 0 83px; }
.t-model { flex: 0 0 113px; }
.t-view { flex: 0 0 76px; }
.t-opt { flex: 0 0 110px; }
.share { margin: 5px 7px 0 auto; width: 105px; height: 30px; border: 0; border-radius: 4px; background: #117865; color: #fff; display: flex; align-items: center; padding: 0 0 0 9px; font: 14px "Open Sans", sans-serif; }
.share span { margin: -2px 6px 0 9px; }
.ribbon { height: 112px; background: #fafafa; display: flex; color: #333; position: relative; z-index: 2; box-shadow: 0 1px 4px rgba(0,0,0,.25); }
.group { height: 110px; border-right: 1px solid #c8c6c4; display: flex; flex-direction: column; align-items: center; }
.tools { display: flex; flex: 0 0 93px; height: 93px; padding-top: 6px; }
.group label { font-size: 12px; line-height: 20px; letter-spacing: -.1px; }
.g-clip { width: 201px; } .g-data { width: 476px; padding-right: 2px; } .g-query { width: 145px; padding-right: 5px; } .g-query label { margin-left: 5px; } .g-insert { width: 184px; padding-right: 2px; } .g-calc { width: 143px; padding-right: 2px; } .g-sens { width: 91px; } .g-share { width: 74px; }
.tool { display: flex; flex-direction: column; align-items: center; text-align: center; letter-spacing: -.12px; }
.tool > span { margin-top: 3px; }
.w40 { width: 40px; } .w48 { width: 48px; } .w50 { width: 50px; } .w60 { width: 60px; } .w62 { width: 62px; } .w76 { width: 76px; } .w78 { width: 78px; } .w106 { width: 106px; }
.dd { display: inline-block; width: 8px; height: 6px; margin-left: 2px; }
.pub { margin-left: 6px; }
.dim, .small { color: #bdbbb9; }
.paste { width: 40px; margin-left: 8px; }
.small { margin: -6px 0 0 9px; width: 130px; letter-spacing: .1px; }
.small div { display: flex; align-items: center; gap: 4px; height: 30px; white-space: nowrap; }
.g-clip .tools { width: 186px; }
.collapse { margin: 97px 6px 0 auto; }

/* Work area */
.work { height: 790px; display: flex; }
.stage-wrap { width: 1468px; display: flex; flex-direction: column; }
.upper { height: 746px; display: flex; overflow: hidden; }
.rail { width: 51px; border-right: 1px solid #e1dfdd; padding: 15px 0 0 15px; background: linear-gradient(#117865, #117865) 0 0/3px 50px no-repeat; display: flex; flex-direction: column; gap: 29px; }
.stage { width: 1376px; background: #3a3a3a; overflow: hidden; padding-left: 24px; }
.report { width: 1328px; height: 746px; background: #808080; box-shadow: 0 0 9px #808080; }
.visual { background: #000; border: 1px solid #111; box-shadow: 9px 9px 12px 1px rgba(184,184,184,.8); color: #fff; flex: none; overflow: hidden; }
.visual h2 { font: bold 19px/22px "Liberation Sans", sans-serif; text-align: center; letter-spacing: .1px; }
.city { width: 1254px; height: 80px; margin-left: 48px; }
.slicer { height: 27px; border: 1px solid #b8b8b8; background: #3b3b3b; color: #ccc; font: 14px/20px "Liberation Sans", sans-serif; display: flex; align-items: center; justify-content: space-between; padding: 0 5px 2px; }
.slicer svg { margin-top: 2px; }
.city h2 { height: 21px; line-height: 21px; }
.city .slicer { margin: 11px 11px 0; }
.report-body { display: flex; padding-left: 46px; }
.kpis { width: 177px; padding-top: 42px; }
.month { width: 144px; height: 100px; margin-left: 2px; }
.month .slicer { margin: 10px 11px 0; }
.kpi { display: flex; flex-direction: column; }
.kpi b { font: 41.500px/42px "Liberation Sans", sans-serif; text-align: center; letter-spacing: -.4px; margin-top: 3px; }
.k1 { width: 143px; height: 109px; margin-top: 24px; }
.k1 b { margin-top: 12px; }
.k2 { width: 141px; height: 92px; margin-top: 23px; }
.k3 { width: 142px; height: 91px; margin: 22px 0 0 2px; }
.k4 { width: 144px; height: 91px; margin: 24px 0 0 2px; }
.k3 h2, .k4 h2 { text-align: left; padding-left: 5px; }
.charts { display: grid; grid-template-columns: 533px 525px; grid-template-rows: 313px 301px; gap: 13px 21px; padding-top: 10px; }
.weapons { margin-left: 3px; border: 0; }
.map { border: 5px solid #409b8c; outline: 1px solid #20423d; outline-offset: -1px; padding-left: 1px; background: #409b8c; }
.weapons > svg { background: linear-gradient(#222, #000 10px); }
.regions { border: 0; background: #1b1b1b; }
svg text { font-family: "Open Sans", sans-serif; }
svg .vt { font: bold 19.300px "Liberation Sans", sans-serif; fill: #fff; }
svg .big { font-size: 22.500px; }
svg .lg text, svg .lgt { font: bold 14px "Liberation Sans", sans-serif; fill: #fff; }
svg .lgr text { font: 14px "Liberation Sans", sans-serif; fill: #fff; stroke: #fff; stroke-width: .2px; }
svg .ax text { font: 12.400px "Liberation Sans", sans-serif; fill: #d0d0d0; stroke: #d0d0d0; stroke-width: .2px; }
svg .land text { font: 11.500px Roboto, sans-serif; fill: #54515f; stroke: #f4f4f4; stroke-width: 2px; paint-order: stroke; }
svg .sea text { font: italic 10.500px Roboto, sans-serif; letter-spacing: 1px; fill: #85858b; stroke: #ddd; stroke-width: 1.500px; paint-order: stroke; }
svg .bing { font: 8.500px "Open Sans", sans-serif; fill: #747474; }
svg .credit { font: 9.500px "Liberation Sans", sans-serif; fill: #111; stroke: #eee; stroke-width: 1px; paint-order: stroke; }
svg .lnk { fill: #2949a5; text-decoration: underline; }
.targets h2 { text-align: left; padding-left: 6px; height: 26px; line-height: 21px; }
.tbl-wrap { display: flex; margin-left: 7px; height: 260px; }
.tbl { width: 512px; font: 14px/20px "Liberation Sans", sans-serif; overflow: hidden; }
.th { height: 33px; display: flex; background: #fff; color: #555; border-bottom: 1px solid #444; }
.th span { line-height: 22px; padding-left: 4px; }
.th span:first-child, .tr span:first-child { flex: 0 0 502px; border-right: 1px solid #555; }
.th i { display: block; width: 0; border: 5px solid transparent; border-bottom-color: #333; border-top: 0; }
.tr { height: 22.800px; display: flex; background: #34526f; border-bottom: 1px solid #264562; }
.tr:nth-child(odd) { background: #2c6ba3; }
.tr span:first-child { border-right-color: #426e94; }
.tr span { padding-left: 4px; line-height: 21px; }
.vbar { width: 8px; background: #858585; }
.vbar i { display: block; height: 10px; width: 8px; border-radius: 4px; background: #2e2e2e; }
.hbar { margin: 0 0 0 7px; width: 512px; height: 9px; border-radius: 5px; background: #858585; }
.hbar i { display: block; width: 191px; height: 9px; border: 1px solid #777; border-radius: 5px; background: #302f2e; }
.filters { width: 41px; background: #383838; border-left: 1px solid #999; color: #fff; padding: 15px 0 0 11px; }
.fun { margin: 18px 0 0 5px; }
.filters span { display: block; writing-mode: vertical-rl; font: bold 17.500px/20px "Open Sans", sans-serif; margin: 9px 0 0 0; letter-spacing: -.3px; }

/* Page tabs */
.pages { height: 44px; margin-left: 50px; border-left: 1px solid #e1dfdd; display: flex; padding-left: 13px; }
.page-tab { margin-left: 2px; width: 95px; border: 1px solid #aaa; border-width: 0 0 0 1px; background: #fff; box-shadow: inset 0 -5px #117865; line-height: 44px; text-align: center; }
.add { width: 49px; height: 40px; margin-top: 2px; background: #117865; display: grid; place-items: center; }

/* Right panes */
.viz, .data { width: 226px; border-left: 1px solid #dedcda; }
.pane-head { display: flex; justify-content: space-between; align-items: center; padding: 14px 10px 0 10px; height: 35px; }
.pane-head h3 { font-size: 17.500px; font-weight: 600; line-height: 24px; letter-spacing: -.3px; }
.pane-head h3 { margin-top: 1px; }
.sub { margin: 13px 0 0 10px; height: 24px; }
.modes { display: flex; align-items: center; padding-left: 10px; gap: 47px; }
.mode { width: 40px; height: 40px; background: #d2d0ce; border-radius: 2px; display: grid; place-items: center; }
.notch { margin-top: 5px; }
.gallery { display: grid; grid-template-columns: repeat(6, 24px); grid-auto-rows: 24px; gap: 11px; padding: 12px 0 0 13px; height: 257px; border-bottom: 1px solid #dedcda; }
.gallery .b { fill: #83beec; stroke: #1068b0; stroke-width: 1.500; }
.gallery .g { fill: #c8c6c4; stroke: #8a8886; stroke-width: 1.300; }
.gallery .k { fill: none; stroke: #3b3a39; stroke-width: 1.500; }
.gallery .w { fill: #fff; }
.gallery .bl { fill: none; stroke: #1b80c4; stroke-width: 1.500; }
.gallery .gl { fill: none; stroke: #8a8886; stroke-width: 1.300; }
.gallery .o { fill: #f8b46d; stroke: #e07010; stroke-width: 1.500; }
.wells { padding: 12px 7px 0 4px; }
.wells p { padding-left: 11px; height: 26px; }
.well { height: 35px; border: 1px dashed #bdbbb9; background: #fff; line-height: 34px; padding-left: 13px; border-radius: 2px; letter-spacing: .1px; }
.wells .drill { margin-top: 14px; height: 31px; color: #444; font-weight: 500; letter-spacing: .2px; }
.opt { display: flex; justify-content: space-between; padding: 0 20px 0 11px; height: 20px; align-items: center; }
.second { margin-top: 14px; }
.tog { width: 40px; height: 20px; border: 1px solid #605e5c; border-radius: 10px; font-size: 11px; color: #605e5c; display: flex; align-items: center; justify-content: center; gap: 3px; }
.tog i { width: 10px; height: 10px; border-radius: 50%; background: #605e5c; }
.yes { background: #117865; border-color: #117865; color: #fff; gap: 5px; }
.yes i { background: #fff; }
.low { margin-top: 13px; height: 33px; padding-left: 10px; line-height: 32px; letter-spacing: .15px; }
.find { margin: 22px 5px 0 5px; height: 33px; border: 1px solid #777; border-radius: 2px; display: flex; align-items: center; padding: 1px 0 0 9px; gap: 7px; font-size: 16px; color: #605e5c; }
.node { display: flex; align-items: center; padding-left: 13px; margin-top: 17px; gap: 7px; color: #484644; letter-spacing: -.1px; }

.status { height: 30px; background: #f3f2f1; border-top: 1px solid #dedcda; display: flex; align-items: center; padding-left: 6px; color: #484644; font-size: 14.500px; }
.status > span:first-child { width: 1644px; }
.pct { width: 48px; margin-left: 18px; letter-spacing: -.5px; }

/* Windows taskbar */
.taskbar { height: 60px; background: #1c1c1c; border-top: 1px solid #444; color: #eee; display: flex; align-items: center; padding-bottom: 1px; }
.weather { width: 299px; margin-left: 24px; display: flex; gap: 8px; align-items: center; font-size: 14.500px; }
.weather span { color: #c8c8c8; }
.start { margin: 0 17px 0 1px; }
.tsearch { width: 275px; height: 40px; border-radius: 20px; background: #3b3b3b; border: 1px solid #4b4b4b; display: flex; align-items: center; padding-left: 14px; gap: 11px; font-size: 16.500px; color: #ccc; }
.art { margin: 3px 0 0 auto; }
.apps { display: flex; margin-left: 2px; }
.apps span { width: 55px; height: 50px; display: grid; place-items: center; position: relative; }
.apps svg { width: 30px; height: 30px; }
.apps em { position: absolute; left: 30px; top: 4px; width: 20px; height: 20px; border-radius: 50%; background: #0a8270; color: #d5ece8; font: 12px/20px "Open Sans", sans-serif; text-align: center; }
.run::after { content: ""; position: absolute; bottom: 1px; width: 8px; height: 4px; border-radius: 2px; background: #999; }
.apps .bi { width: 49px; margin: 0 3px; background: #2b2b2b; border-radius: 5px; border: 1px solid #383838; }
.bi::after { width: 20px; background: #4cc2ff; }
.apps .snip { width: 49px; margin: 0 3px; background: #452829; border-radius: 5px; }
.snip::after { background: #ff99a4; }
.tray { margin-left: 28px; }
.lang { width: 40px; margin-left: 3px; text-align: center; font-size: 14.500px; }
.sys { margin: 0 0 0 18px; }
.clock { width: 90px; margin-left: 3px; text-align: right; white-space: nowrap; font-size: 14.500px; }
.bell { margin-left: 10px; }
```
